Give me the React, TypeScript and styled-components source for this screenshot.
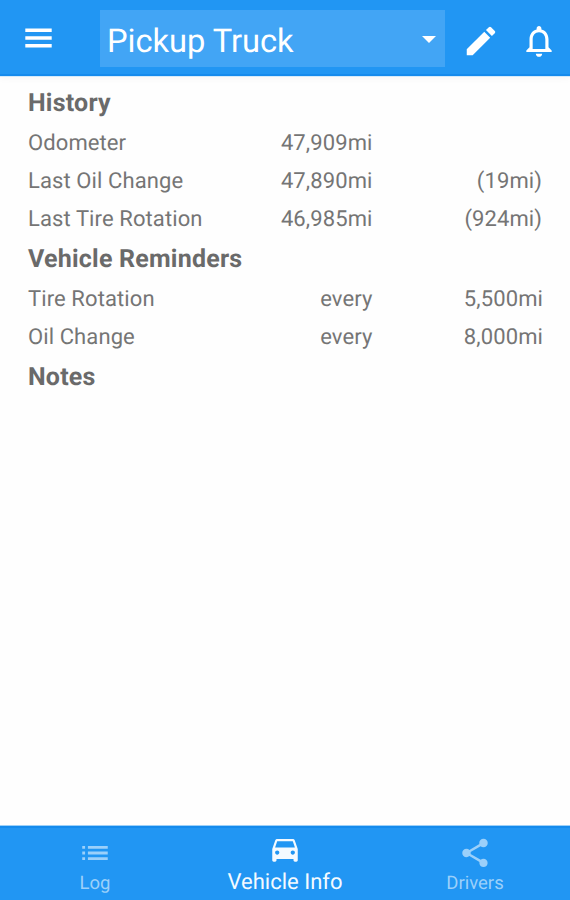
import React from 'react';
import styled, { createGlobalStyle } from 'styled-components';

const GlobalStyle = createGlobalStyle`
  * { box-sizing: border-box; }
  body {
    margin: 0;
    background: #fefefe;
    font-family: Roboto, sans-serif;
    text-rendering: geometricPrecision;
  }
`;

const Screen = styled.div`
  display: flex;
  flex-direction: column;
  width: 570px;
  height: 900px;
  overflow: hidden;
`;

const TopBar = styled.header`
  display: flex;
  align-items: flex-start;
  flex: none;
  height: 76px;
  background: #2196f3;
  border-bottom: 2px solid #158bed;
  box-shadow: 0 1px 0 #d3eafb, 0 2px 8px #f6f6f6;
`;

const IconButton = styled.button<{ $left: number; $top: number }>`
  display: flex;
  flex: none;
  padding: 0;
  border: 0;
  background: none;
  color: #fff;
  margin: ${(p) => p.$top}px 0 0 ${(p) => p.$left}px;
`;

const Picker = styled.div`
  display: flex;
  align-items: center;
  justify-content: space-between;
  width: 345px;
  height: 57px;
  margin: 10px 0 0 48px;
  padding: 2px 9px 0 7px;
  background: #42a5f5;
  color: #fff;
`;

const PickerLabel = styled.span`
  padding-top: 2px;
  font-size: 32.7px;
  line-height: 40px;
  letter-spacing: -0.05px;
  white-space: nowrap;
`;

const Content = styled.main`
  flex: 1;
  padding: 9px 27px 0 28px;
`;

const Heading = styled.h2`
  margin: 0;
  height: 38px;
  line-height: 38px;
  font-size: 25px;
  font-weight: 700;
  letter-spacing: 0.22px;
  color: #6a6a6a;
`;

const Rows = styled.div`
  padding: 2px 0;
`;

const Row = styled.div`
  display: grid;
  grid-template-columns: 200px 144.5px 1fr;
  height: 38px;
  line-height: 38px;
  font-size: 22px;
  font-weight: 400;
  letter-spacing: 0.1px;
  color: #757575;
  white-space: nowrap;
`;

const Value = styled.span<{ $inset?: boolean }>`
  padding-right: ${(p) => (p.$inset ? 1 : 0)}px;
  text-align: right;
`;

const BottomNav = styled.nav`
  display: grid;
  grid-template-columns: repeat(3, 1fr);
  flex: none;
  height: 74px;
  background: #2196f3;
  border-top: 2px solid #158bed;
  box-shadow: 0 -1px 0 #9dd0f8;
`;

const Tab = styled.a<{ $active?: boolean }>`
  display: flex;
  flex-direction: column;
  align-items: center;
  color: ${(p) => (p.$active ? '#f4faff' : '#9bd0fa')};
  font-size: ${(p) => (p.$active ? 22 : 18.5)}px;
  line-height: 26px;
  padding-top: ${(p) => (p.$active ? 4 : 8)}px;
  white-space: nowrap;
`;

const TabLabel = styled.span<{ $active?: boolean }>`
  margin-top: ${(p) => (p.$active ? 4 : 0)}px;
`;

const Glyph = ({ d, size }: { d: string; size: number }) => (
  <svg width={size} height={size} viewBox="0 0 24 24" fill="currentColor">
    <path d={d} />
  </svg>
);

const PENCIL =
  'M3 17.25V21h3.75L17.81 9.94l-3.75-3.75L3 17.25zM20.71 7.04a1 1 0 0 0 0-1.41l-2.34-2.34a1 1 0 0 0-1.41 0l-1.83 1.83 3.75 3.75 1.83-1.83z';
const BELL =
  'M12 22c1.1 0 2-.9 2-2h-4c0 1.1.9 2 2 2zm6-6v-5c0-3.07-1.63-5.64-4.5-6.32V4c0-.83-.67-1.5-1.5-1.5s-1.5.67-1.5 1.5v.68C7.64 5.36 6 7.92 6 11v5l-2 2v1h16v-1l-2-2zm-2 1H8v-6c0-2.48 1.51-4.5 4-4.5s4 2.02 4 4.5v6z';
const LIST = 'M3 13h2v-2H3v2zm0 4h2v-2H3v2zm0-8h2V7H3v2zm4 4h14v-2H7v2zm0 4h14v-2H7v2zM7 7v2h14V7H7z';
const CAR =
  'M18.92 6.01C18.72 5.42 18.16 5 17.5 5h-11c-.66 0-1.21.42-1.42 1.01L3 12v8c0 .55.45 1 1 1h1c.55 0 1-.45 1-1v-1h12v1c0 .55.45 1 1 1h1c.55 0 1-.45 1-1v-8l-2.08-5.99zM6.5 16c-.83 0-1.5-.67-1.5-1.5S5.67 13 6.5 13s1.5.67 1.5 1.5S7.33 16 6.5 16zm11 0c-.83 0-1.5-.67-1.5-1.5s.67-1.5 1.5-1.5 1.5.67 1.5 1.5-.67 1.5-1.5 1.5zM5 11l1.5-4.5h11L19 11H5z';
const SHARE =
  'M18 16.08c-.76 0-1.44.3-1.96.77L8.91 12.7c.05-.23.09-.46.09-.7s-.04-.47-.09-.7l7.05-4.11c.54.5 1.25.81 2.04.81 1.66 0 3-1.34 3-3s-1.34-3-3-3-3 1.34-3 3c0 .24.04.47.09.7L8.04 9.81C7.5 9.31 6.79 9 6 9c-1.66 0-3 1.34-3 3s1.34 3 3 3c.79 0 1.5-.31 2.04-.81l7.12 4.16c-.05.21-.08.43-.08.65 0 1.61 1.31 2.92 2.92 2.92s2.92-1.31 2.92-2.92-1.31-2.92-2.92-2.92z';

const history = [
  ['Odometer', '47,909mi', ''],
  ['Last Oil Change', '47,890mi', '(19mi)'],
  ['Last Tire Rotation', '46,985mi', '(924mi)'],
];
const reminders = [
  ['Tire Rotation', 'every', '5,500mi'],
  ['Oil Change', 'every', '8,000mi'],
];

const Table = ({ rows, inset }: { rows: string[][]; inset?: boolean }) => (
  <Rows>
    {rows.map(([name, middle, last]) => (
      <Row key={name}>
        <span>{name}</span>
        <Value>{middle}</Value>
        <Value $inset={inset}>{last}</Value>
      </Row>
    ))}
  </Rows>
);

export default function App() {
  return (
    <>
      <GlobalStyle />
      <Screen>
        <TopBar>
          <IconButton $left={25} $top={28} aria-label="Menu">
            <svg width="27" height="20" viewBox="0 0 27 20" fill="currentColor">
              <path d="M.3.5h26.4v3.4H.3zM.3 8.3h26.4v3.4H.3zM.3 16.1h26.4v3.4H.3z" />
            </svg>
          </IconButton>
          <Picker>
            <PickerLabel>Pickup Truck</PickerLabel>
            <svg width="14" height="7" viewBox="0 0 14 7" fill="currentColor">
              <path d="M0 0h14L7 7z" />
            </svg>
          </Picker>
          <IconButton $left={17} $top={22} aria-label="Edit">
            <Glyph d={PENCIL} size={38} />
          </IconButton>
          <IconButton $left={20} $top={22} aria-label="Notifications">
            <Glyph d={BELL} size={38} />
          </IconButton>
        </TopBar>
        <Content>
          <Heading>History</Heading>
          <Table rows={history} inset />
          <Heading>Vehicle Reminders</Heading>
          <Table rows={reminders} />
          <Heading>Notes</Heading>
        </Content>
        <BottomNav>
          <Tab>
            <Glyph d={LIST} size={34} />
            <TabLabel>Log</TabLabel>
          </Tab>
          <Tab $active>
            <Glyph d={CAR} size={34} />
            <TabLabel $active>Vehicle Info</TabLabel>
          </Tab>
          <Tab>
            <Glyph d={SHARE} size={34} />
            <TabLabel>Drivers</TabLabel>
          </Tab>
        </BottomNav>
      </Screen>
    </>
  );
}
